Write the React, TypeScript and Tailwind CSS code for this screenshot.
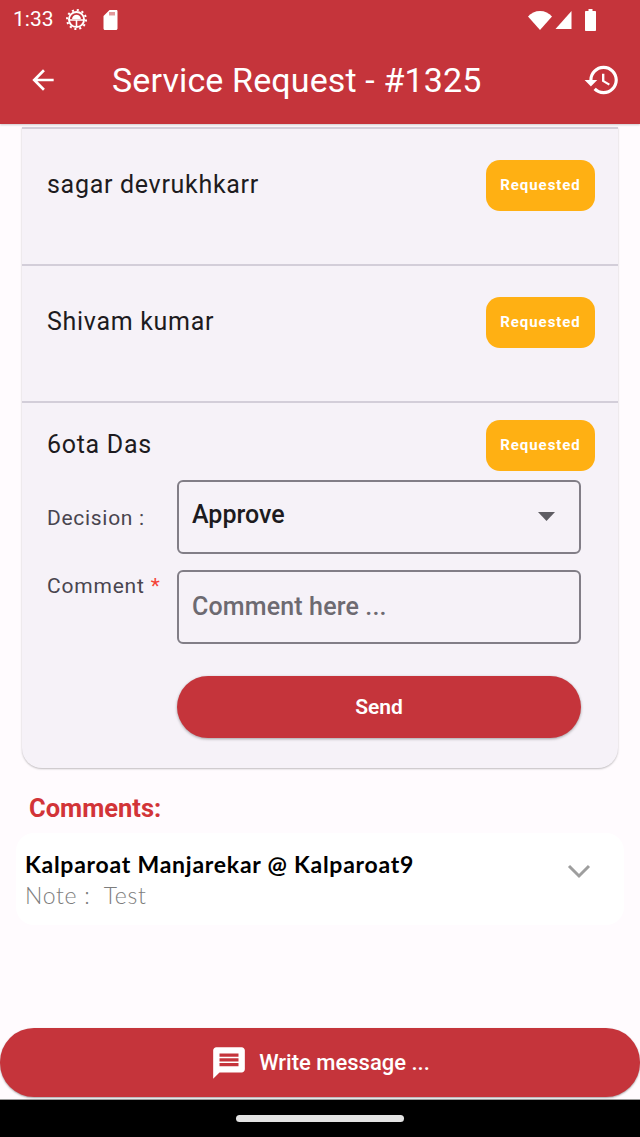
const ROBOTO = "font-['Roboto',sans-serif]";

function Requested() {
  return (
    <span className="flex h-[51px] w-[109px] shrink-0 items-center justify-center rounded-[14px] bg-[#ffb013] text-[15px] font-bold tracking-[0.95px] text-white">
      Requested
    </span>
  );
}

function SimpleRow({ name }: { name: string }) {
  return (
    <div className="flex h-[137px] items-start justify-between border-b-[2px] border-[#d3ced9] pl-[25px] pr-[23px] pt-[31px]">
      <span className="mt-[9px] text-[25px] leading-[32px] tracking-[0.7px] text-[#1d1b20]">{name}</span>
      <Requested />
    </div>
  );
}

function StatusBar() {
  return (
    <div className="flex h-[39px] items-center justify-between pl-[13px] pr-[43px] text-white">
      <div className="flex items-center">
        <span className="text-[21px] leading-none">1:33</span>
        <svg className="ml-[12px]" width="21" height="21" viewBox="0 0 20 20" fill="none">
          <circle cx="10" cy="10" r="7.200" stroke="white" strokeWidth="1.800" />
          <circle cx="10" cy="10" r="9" stroke="white" strokeWidth="2" strokeDasharray="2 2.710" />
          <path d="M3 10.500h14M10 10.500v6" stroke="white" strokeWidth="1.500" />
          <path d="M5.800 9.500a4.200 4 0 0 1 8.400 0z" fill="white" />
        </svg>
        <svg className="ml-[16px]" width="15" height="20" viewBox="0 0 14 20" fill="white">
          <path d="M13 0H6L0 6v12.500C0 19.300.7 20 1.500 20H12.500C13.300 20 14 19.300 14 18.500V1.500C14 .7 13.800 0 13 0zM7 5.500H6V2h1zm2 0H8V2h1zm2 0h-1V2h1z" />
        </svg>
      </div>
      <div className="flex items-center">
        <svg width="24" height="20" viewBox="0 0 24 20" fill="white">
          <path d="M0 6.500C3 3 7.300 1 12 1s9 2 12 5.500L12 20z" />
        </svg>
        <svg className="ml-[2px]" width="19" height="20" viewBox="0 0 16 20" fill="white">
          <path d="M16 1v18H0z" />
        </svg>
        <svg className="ml-[11px]" width="13" height="22" viewBox="0 0 11 22" fill="white">
          <path d="M3.500 0h4v2H10c.6 0 1 .4 1 1v18c0 .6-.4 1-1 1H1c-.6 0-1-.4-1-1V3c0-.6.4-1 1-1h2.500z" />
        </svg>
      </div>
    </div>
  );
}

export default function App() {
  return (
    <div className={`flex h-[1137px] w-[640px] flex-col overflow-hidden bg-[#fffbfe] ${ROBOTO}`}>
      {/* App bar */}
      <header className="h-[124px] shrink-0 bg-[#c5343b] shadow-[0_1px_2px_rgba(0,0,0,0.2)]">
        <StatusBar />
        <div className="flex h-[81px] items-center pl-[27px] pr-[19px] text-white">
          <svg width="32" height="32" viewBox="0 0 24 24" fill="white">
            <path d="M20 11H7.830l5.590-5.590L12 4l-8 8 8 8 1.410-1.410L7.830 13H20v-2z" />
          </svg>
          <h1 className="ml-[53px] flex-1 text-[34px] font-normal leading-none tracking-[0.13px]">Service Request - #1325</h1>
          <svg width="38" height="38" viewBox="0 0 24 24" fill="white">
            <path d="M13 3c-4.970 0-9 4.030-9 9H1l3.890 3.890.07.140L9 12H6c0-3.870 3.130-7 7-7s7 3.130 7 7-3.130 7-7 7c-1.930 0-3.680-.790-4.940-2.060l-1.420 1.420C8.270 19.990 10.510 21 13 21c4.970 0 9-4.030 9-9s-4.030-9-9-9zm-1 5v5l4.280 2.540.720-1.210-3.500-2.080V8H12z" />
          </svg>
        </div>
      </header>

      {/* Requests card */}
      <div className="mx-[22px] mt-[3px] rounded-b-[20px] bg-[#f6f2f8] shadow-[0_1px_2px_rgba(0,0,0,0.25)]">
        <div className="h-[2px] bg-[#d3ced9]" />
        <SimpleRow name="sagar devrukhkarr" />
        <SimpleRow name="Shivam kumar" />
        <div className="pl-[25px] pr-[23px] pt-[17px] pb-[30px]">
          <div className="flex items-start justify-between">
            <span className="mt-[9px] text-[25px] leading-[32px] tracking-[0.7px] text-[#1d1b20]">6ota Das</span>
            <Requested />
          </div>
          <div className="mt-[9px] flex pr-[14px]">
            <span className="mt-[24px] w-[130px] shrink-0 text-[21px] leading-[28px] tracking-[0.7px] text-[#49454f]">Decision :</span>
            <div className="flex h-[74px] flex-1 items-start justify-between rounded-[6px] border-[2px] border-[#827e87] pl-[13px] pr-[24px] pt-[17px]">
              <span className="text-[25px] font-medium leading-[32px] text-[#1d1b20]">Approve</span>
              <svg className="mt-[13px]" width="17" height="9" viewBox="7 10 10 5" preserveAspectRatio="none" fill="#5f5d63">
                <path d="M7 10l5 5 5-5z" />
              </svg>
            </div>
          </div>
          <div className="mt-[16px] flex pr-[14px]">
            <span className="mt-[2px] w-[130px] shrink-0 text-[21px] leading-[28px] tracking-[0.8px] text-[#49454f]">
              Comment <span className="text-[#f44336]">*</span>
            </span>
            <div className="flex h-[74px] flex-1 items-center rounded-[6px] border-[2px] border-[#827e87] pl-[13px]">
              <span className="text-[25px] font-medium tracking-[0.15px] text-[#6d6a71]">Comment here ...</span>
            </div>
          </div>
          <div className="mt-[32px] flex pr-[14px] pl-[130px]">
            <button className="flex h-[62px] flex-1 items-center justify-center rounded-full bg-[#c5343b] pt-[1px] text-[21px] font-semibold text-white shadow-[0_1px_3px_rgba(0,0,0,0.35)]">
              Send
            </button>
          </div>
        </div>
      </div>

      {/* Comments */}
      <h2 className="ml-[29px] mt-[26px] text-[25.500px] font-bold leading-[28px] text-[#d23438]">Comments:</h2>
      <div className="mx-[16px] mt-[11px] flex h-[92px] rounded-[18px] bg-white pl-[9px] pr-[33px] pt-[17px]">
        <div className="flex-1 font-['Lato',sans-serif]">
          <p className="text-[23px] font-bold leading-[28px] tracking-[0.75px] text-black">Kalparoat Manjarekar @ Kalparoat9</p>
          <p className="mt-[3px] whitespace-pre text-[23px] font-light leading-[28px] tracking-[0.7px] text-[#7d7d7d]">Note :  Test</p>
        </div>
        <svg className="mt-[13px]" width="24" height="16" viewBox="0 0 24 16" fill="none" stroke="#9e9e9e" strokeWidth="3">
          <path d="M2 3l10 10L22 3" />
        </svg>
      </div>

      {/* Write message */}
      <div className="mt-auto">
        <button className="flex h-[69px] w-full items-center justify-center rounded-[34px] bg-[#c5343b] text-[22px] font-medium text-white shadow-[0_1px_2px_rgba(0,0,0,0.35)]">
          <svg className="mr-[11px] mt-[1px]" width="38" height="38" viewBox="0 0 24 24" fill="white">
            <path d="M20 2H4c-1.100 0-1.990.900-1.990 2L2 22l4-4h14c1.100 0 2-.900 2-2V4c0-1.100-.900-2-2-2zm-2 12H6v-2h12v2zm0-3H6V9h12v2zm0-3H6V6h12v2z" />
          </svg>
          Write message ...
        </button>
        <div className="mt-[2px] flex h-[38px] items-center justify-center border-t border-[#9a9a9a] bg-black">
          <div className="h-[7px] w-[168px] rounded-full bg-[#e3e3e3]" />
        </div>
      </div>
    </div>
  );
}
